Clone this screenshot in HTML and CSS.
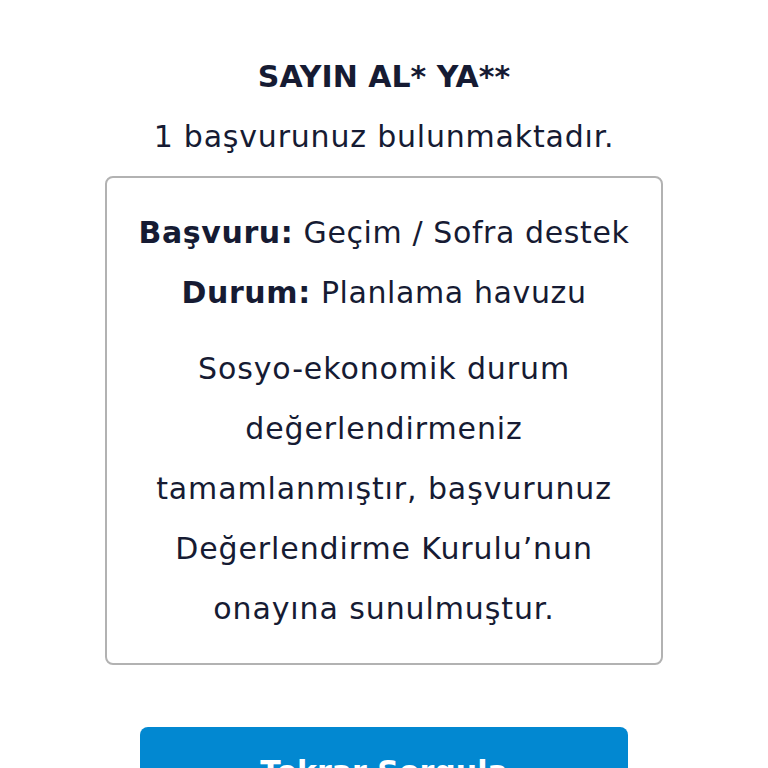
FILE: index.html
```html
<!DOCTYPE html>
<html lang="tr">
<head>
    <meta charset="UTF-8">
    <meta name="viewport" content="width=device-width, initial-scale=1.0">
    <title>Başvuru Sorgulama</title>
    <link rel="stylesheet" href="styles.css">
</head>
<body>
    <div class="result-container">
        <h1 class="greeting">SAYIN AL* YA**</h1>
        <p class="count">1 başvurunuz bulunmaktadır.</p>

        <div class="result-card">
            <p class="row"><strong>Başvuru:</strong> Geçim / Sofra destek</p>
            <p class="row"><strong>Durum:</strong> Planlama havuzu</p>
            <p class="message">
                Sosyo-ekonomik durum<br>
                değerlendirmeniz<br>
                tamamlanmıştır, başvurunuz<br>
                Değerlendirme Kurulu’nun<br>
                onayına sunulmuştur.
            </p>
        </div>

        <button type="button" class="retry-btn">Tekrar Sorgula</button>
    </div>
</body>
</html>
```

FILE: styles.css
```css
* {
    margin: 0;
    padding: 0;
    box-sizing: border-box;
    font-family: 'DejaVu Sans', 'Noto Sans', sans-serif;
}

body {
    background: #fff;
    color: #161b33;
}

.result-container {
    display: flex;
    flex-direction: column;
    align-items: center;
    padding-top: 47px;
    text-align: center;
}

.greeting {
    font-size: 30px;
    font-weight: 700;
    line-height: 60px;
}

.count {
    font-size: 30px;
    line-height: 60px;
    letter-spacing: 0.8px;
}

.result-card {
    width: 558px;
    margin-top: 9px;
    padding: 25px 10px 24px;
    border: 2px solid #b2b2b2;
    border-radius: 8px;
}

.row {
    font-size: 30px;
    line-height: 60px;
    letter-spacing: 0.6px;
}

.row strong {
    font-weight: 700;
}

.message {
    margin-top: 16px;
    font-size: 30px;
    line-height: 60px;
    letter-spacing: 0.9px;
}

.retry-btn {
    width: 488px;
    height: 88px;
    margin-top: 62px;
    border: none;
    border-radius: 8px;
    background: #0288d1;
    color: #fff;
    font-size: 30px;
    font-weight: 700;
    cursor: pointer;
}
```
